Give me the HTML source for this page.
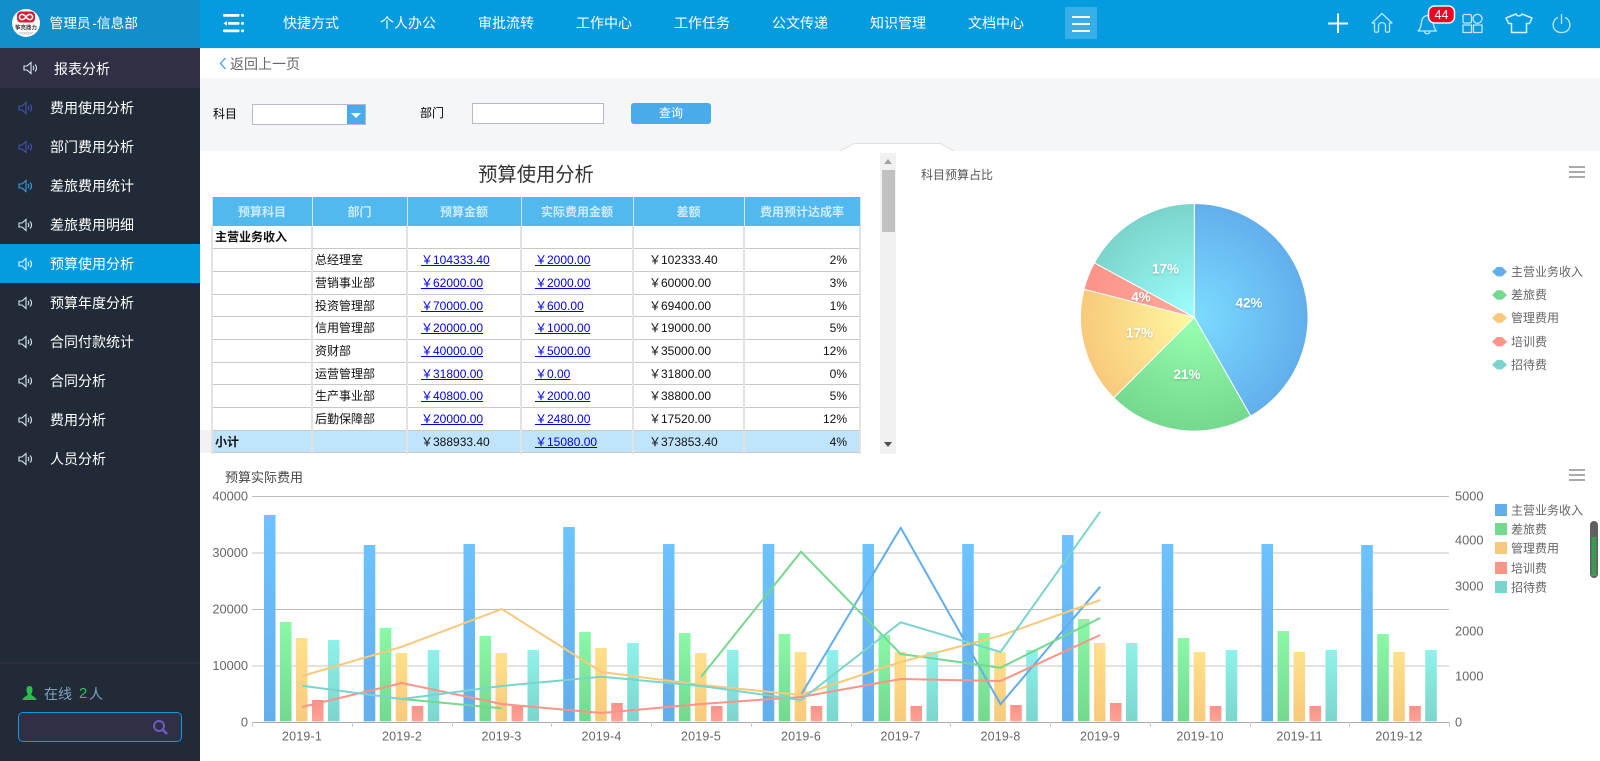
<!DOCTYPE html>
<html lang="zh">
<head>
<meta charset="utf-8">
<title>预算使用分析</title>
<style>
*{box-sizing:border-box}
html,body{margin:0;padding:0;width:1600px;height:761px;overflow:hidden;background:#fff;font-family:"Liberation Sans","Noto Sans CJK SC",sans-serif;font-size:12px;color:#000}
.a{position:absolute;white-space:nowrap}
#hl{position:absolute;left:0;top:0;width:200px;height:48px;background:#118fcb}
#hr{position:absolute;left:200px;top:0;width:1400px;height:48px;background:#059bdf;box-shadow:0 1px 1px rgba(0,0,0,.08)}
.nav{position:absolute;top:0;line-height:47px;color:#fff;font-size:14px}
#side{position:absolute;left:0;top:48px;width:200px;height:713px;background:#212b37}
.mi{position:absolute;left:0;width:200px;height:39px;line-height:39px;color:#fff;font-size:14px;padding-left:50px;padding-top:1px}
.mi svg{position:absolute;left:18px;top:13px}
#tb{position:absolute;left:211px;top:197px;width:650px;height:257px;overflow:hidden}
table{border-collapse:collapse;table-layout:fixed;width:648px;font-size:12px}
td{padding:1px 0 0;border-left:2px solid #e2e2e2;border-right:2px solid #e2e2e2;border-bottom:1px solid #c8c8c8;white-space:nowrap;overflow:hidden;line-height:20px;color:#111}
tr.h td{background:#52b9ee;color:#cdebfb;font-weight:bold;text-align:center;border:0;border-right:1px solid #cfeafa;border-left:1px solid #cfeafa;padding-top:0}
td.n{padding-left:2px}
td.l{padding-left:13px}
td.l2{padding-left:13px}
td.m{padding-left:15px}
td.p{text-align:right;padding-right:12px}
a{color:#0000ee;text-decoration:underline}
tr.s td{background:#bfe4fc}
</style>
</head>
<body>
<div id="hl"></div>
<svg class="a" style="left:12px;top:9px" width="28" height="28" viewBox="0 0 28 28">
<circle cx="14" cy="14" r="14" fill="#fff"/>
<rect x="5" y="2.5" width="18" height="11" rx="4" fill="#d81b33"/>
<path d="M14 8C12 5 9.500 5 8.500 6C7 7 7 9 8.500 10C9.500 11 12 11 14 8C16 5 18.500 5 19.500 6C21 7 21 9 19.500 10C18.500 11 16 11 14 8Z" fill="none" stroke="#fff" stroke-width="1.500"/>
<text x="14" y="20.500" font-size="5.500" font-weight="bold" text-anchor="middle" fill="#333" font-family="'Noto Sans CJK SC',sans-serif">筝亮鼎力</text>
<text x="14" y="25.500" font-size="3.500" text-anchor="middle" fill="#999">POWER</text>
</svg>
<div class="a" style="left:49.500px;top:0;line-height:48px;color:#fff;font-size:13.700px;word-spacing:-2px">管理员 -信息部</div>

<div id="hr"></div>
<svg class="a" style="left:222px;top:13px" width="23" height="21" viewBox="0 0 23 21">
<g fill="#fff">
<rect x="1" y="1" width="16.500" height="2.800" rx="1"/><rect x="19" y="1" width="3" height="2.800" rx="1"/>
<rect x="6" y="9" width="11.500" height="2.800" rx="1"/><rect x="19" y="9" width="3" height="2.800" rx="1"/>
<path d="M1.500 10.400L5 8V12.800Z"/>
<rect x="1" y="16.500" width="16.500" height="2.800" rx="1"/><rect x="19" y="16.500" width="3" height="2.800" rx="1"/>
</g>
</svg>
<div class="nav" style="left:283px">快捷方式</div>
<div class="nav" style="left:380px">个人办公</div>
<div class="nav" style="left:478px">审批流转</div>
<div class="nav" style="left:576px">工作中心</div>
<div class="nav" style="left:674px">工作任务</div>
<div class="nav" style="left:772px">公文传递</div>
<div class="nav" style="left:870px">知识管理</div>
<div class="nav" style="left:968px">文档中心</div>
<div class="a" style="left:1065px;top:7px;width:32px;height:32px;background:#38aee7"></div>
<div class="a" style="left:1072px;top:16px;width:18px;height:2px;background:#fff"></div>
<div class="a" style="left:1072px;top:23px;width:18px;height:2px;background:#fff"></div>
<div class="a" style="left:1072px;top:30px;width:18px;height:2px;background:#fff"></div>

<svg class="a" style="left:1320px;top:0" width="270" height="48" viewBox="0 0 270 48">
<path d="M8 23.500H28M18 13.500V33" stroke="#fff" stroke-width="2" fill="none"/>
<g fill="none" stroke="#bfe6fa" stroke-width="1.300" stroke-linejoin="round">
<path d="M52 23L62 13.500L72 23H69.500V31.500C69.500 32.500 65.500 32.500 65.500 31.500V26C65.500 21.500 58.500 21.500 58.500 26V31.500C58.500 32.500 54.500 32.500 54.500 31.500V23Z"/>
<path d="M98 31C101 29 101 25 101.500 22C102 18 104 16 107 15.500C111 16 112.500 18 113 22C113.500 25 114 29 116.500 31ZM104.500 31.500C105 34.500 109.500 34.500 110 31.500"/>
<rect x="143" y="14.500" width="8.500" height="8.500" rx="1.500"/>
<circle cx="157.500" cy="18.800" r="4.500"/>
<rect x="143" y="25" width="8.500" height="7.500"/>
<rect x="153.500" y="25" width="8.500" height="7.500"/>
<path d="M194 14C195 16.500 199 16.500 200 14L210 18L207.500 23.500H204.500V32.500H189.500V23.500H186.500L184 18Z" stroke="#d7f0fc" stroke-width="1.500" transform="translate(2 0)"/>
<path d="M238 17.500C231 20 231 32.500 241.500 32.500C252 32.500 252 20 245 17.500M241.500 14V24"/>
</g>
<rect x="108.500" y="6" width="26" height="17" rx="6" fill="#f50025" stroke="#e9f6fd" stroke-width="1.500"/>
<text x="121.500" y="19" font-size="12.500" fill="#fff" text-anchor="middle">44</text>
</svg>

<div id="side"></div>
<div class="a" style="left:0;top:48px;width:200px;height:40px;background:#2f3043"></div>
<div class="a" style="left:54px;top:49px;line-height:40px;color:#fff;font-size:14px">报表分析</div>
<svg class="a" style="left:23px;top:61px" width="16" height="15" viewBox="0 0 16 15"><g fill="none" stroke="#d8e6f0" stroke-width="1.100"><path d="M1 5H4L8 1.500V12.500L4 9H1Z"/><path d="M10 5C11 6 11 8 10 9M12 3.500C14 5.500 14 8.500 12 10.500"/></g></svg>

<div class="mi" style="top:88px"><svg width="16" height="15" viewBox="0 0 16 15"><g fill="none" stroke="#4a50b4" stroke-width="1.100"><path d="M1 5H4L8 1.500V12.500L4 9H1Z"/><path d="M10 5C11 6 11 8 10 9M12 3.500C14 5.500 14 8.500 12 10.500"/></g></svg>费用使用分析</div>
<div class="mi" style="top:127px"><svg width="16" height="15" viewBox="0 0 16 15"><g fill="none" stroke="#4a50b4" stroke-width="1.100"><path d="M1 5H4L8 1.500V12.500L4 9H1Z"/><path d="M10 5C11 6 11 8 10 9M12 3.500C14 5.500 14 8.500 12 10.500"/></g></svg>部门费用分析</div>
<div class="mi" style="top:166px"><svg width="16" height="15" viewBox="0 0 16 15"><g fill="none" stroke="#3aa0dc" stroke-width="1.100"><path d="M1 5H4L8 1.500V12.500L4 9H1Z"/><path d="M10 5C11 6 11 8 10 9M12 3.500C14 5.500 14 8.500 12 10.500"/></g></svg>差旅费用统计</div>
<div class="mi" style="top:205px"><svg width="16" height="15" viewBox="0 0 16 15"><g fill="none" stroke="#d8e6f0" stroke-width="1.100"><path d="M1 5H4L8 1.500V12.500L4 9H1Z"/><path d="M10 5C11 6 11 8 10 9M12 3.500C14 5.500 14 8.500 12 10.500"/></g></svg>差旅费用明细</div>
<div class="mi" style="top:244px;background:#059bdf"><svg width="16" height="15" viewBox="0 0 16 15"><g fill="none" stroke="#e6f6ff" stroke-width="1.100"><path d="M1 5H4L8 1.500V12.500L4 9H1Z"/><path d="M10 5C11 6 11 8 10 9M12 3.500C14 5.500 14 8.500 12 10.500"/></g></svg>预算使用分析</div>
<div class="mi" style="top:283px"><svg width="16" height="15" viewBox="0 0 16 15"><g fill="none" stroke="#d8e6f0" stroke-width="1.100"><path d="M1 5H4L8 1.500V12.500L4 9H1Z"/><path d="M10 5C11 6 11 8 10 9M12 3.500C14 5.500 14 8.500 12 10.500"/></g></svg>预算年度分析</div>
<div class="mi" style="top:322px"><svg width="16" height="15" viewBox="0 0 16 15"><g fill="none" stroke="#d8e6f0" stroke-width="1.100"><path d="M1 5H4L8 1.500V12.500L4 9H1Z"/><path d="M10 5C11 6 11 8 10 9M12 3.500C14 5.500 14 8.500 12 10.500"/></g></svg>合同付款统计</div>
<div class="mi" style="top:361px"><svg width="16" height="15" viewBox="0 0 16 15"><g fill="none" stroke="#d8e6f0" stroke-width="1.100"><path d="M1 5H4L8 1.500V12.500L4 9H1Z"/><path d="M10 5C11 6 11 8 10 9M12 3.500C14 5.500 14 8.500 12 10.500"/></g></svg>合同分析</div>
<div class="mi" style="top:400px"><svg width="16" height="15" viewBox="0 0 16 15"><g fill="none" stroke="#d8e6f0" stroke-width="1.100"><path d="M1 5H4L8 1.500V12.500L4 9H1Z"/><path d="M10 5C11 6 11 8 10 9M12 3.500C14 5.500 14 8.500 12 10.500"/></g></svg>费用分析</div>
<div class="mi" style="top:439px"><svg width="16" height="15" viewBox="0 0 16 15"><g fill="none" stroke="#d8e6f0" stroke-width="1.100"><path d="M1 5H4L8 1.500V12.500L4 9H1Z"/><path d="M10 5C11 6 11 8 10 9M12 3.500C14 5.500 14 8.500 12 10.500"/></g></svg>人员分析</div>

<div class="a" style="left:0;top:662px;width:200px;height:2px;background:#2b2f3f"></div>
<svg class="a" style="left:22px;top:685px" width="15" height="16" viewBox="0 0 15 16"><path d="M7.500 1C5 1 4.500 3 4.500 5C4.500 7 5.500 8.500 5.800 9.500C5 11 1 12 .5 15H14.500C14 12 10 11 9.200 9.500C9.500 8.500 10.500 7 10.500 5C10.500 3 10 1 7.500 1Z" fill="#2bbd4f"/></svg>
<div class="a" style="left:44px;top:684px;line-height:20px;font-size:14px;color:#7fa2c0">在线</div>
<div class="a" style="left:79px;top:684px;line-height:20px;font-size:15px;color:#2bc455">2</div>
<div class="a" style="left:89px;top:684px;line-height:20px;font-size:14px;color:#7fa2c0">人</div>
<div class="a" style="left:18px;top:712px;width:164px;height:30px;background:#2f3045;border:1px solid #0d9ae0;border-radius:5px"></div>
<svg class="a" style="left:152px;top:719px" width="17" height="16" viewBox="0 0 17 16"><circle cx="7" cy="7" r="5" fill="none" stroke="#6a5cc0" stroke-width="2"/><path d="M11 11L15 15" stroke="#6a5cc0" stroke-width="2.500"/></svg>

<svg class="a" style="left:219px;top:57px" width="8" height="13" viewBox="0 0 8 13"><path d="M6.500 1L1.500 6.500L6.500 12" fill="none" stroke="#3ba0e0" stroke-width="1.300"/></svg>
<div class="a" style="left:230px;top:54px;line-height:20px;font-size:14px;color:#666">返回上一页</div>

<div class="a" style="left:200px;top:78px;width:1400px;height:73px;background:#f5f6f8"></div>
<div class="a" style="left:213px;top:104px;line-height:20px;color:#000">科目</div>
<div class="a" style="left:252px;top:104px;width:114px;height:21px;background:#fff;border:1px solid #b8b8cc"></div>
<div class="a" style="left:347px;top:105px;width:18px;height:19px;background:#4aabea"></div>
<div class="a" style="left:351px;top:113px;width:0;height:0;border-left:5px solid transparent;border-right:5px solid transparent;border-top:5px solid #fff"></div>
<div class="a" style="left:420px;top:103px;line-height:20px;color:#000">部门</div>
<div class="a" style="left:472px;top:103px;width:132px;height:21px;background:#fff;border:1px solid #b8b8cc"></div>
<div class="a" style="left:631px;top:103px;width:80px;height:21px;background:#4aabeb;border-radius:3px;color:#fff;text-align:center;line-height:21px">查询</div>
<svg class="a" style="left:838px;top:142px" width="118" height="9" viewBox="0 0 118 9"><path d="M2 9L16 1.500H102L116 9" fill="#fff" stroke="#e0e0e0"/></svg>

<div class="a" style="left:212px;top:162px;width:648px;text-align:center;font-size:19.300px;line-height:28px;color:#333">预算使用分析</div>
<div class="a" style="left:200px;top:430px;width:12px;height:23px;background:#f2f2f2"></div>
<div id="tb">
<table>
<colgroup><col style="width:100px"><col style="width:95px"><col style="width:114px"><col style="width:112px"><col style="width:111px"><col style="width:116px"></colgroup>
<tr class="h" style="height:29px"><td>预算科目</td><td>部门</td><td>预算金额</td><td>实际费用金额</td><td>差额</td><td>费用预计达成率</td></tr>
<tr style="height:22px"><td class="n"><b>主营业务收入</b></td><td></td><td></td><td></td><td></td><td></td></tr>
<tr style="height:23px"><td></td><td class="n">总经理室</td><td class="l"><a>￥104333.40</a></td><td class="l2"><a>￥2000.00</a></td><td class="m">￥102333.40</td><td class="p">2%</td></tr>
<tr style="height:23px"><td></td><td class="n">营销事业部</td><td class="l"><a>￥62000.00</a></td><td class="l2"><a>￥2000.00</a></td><td class="m">￥60000.00</td><td class="p">3%</td></tr>
<tr style="height:22px"><td></td><td class="n">投资管理部</td><td class="l"><a>￥70000.00</a></td><td class="l2"><a>￥600.00</a></td><td class="m">￥69400.00</td><td class="p">1%</td></tr>
<tr style="height:23px"><td></td><td class="n">信用管理部</td><td class="l"><a>￥20000.00</a></td><td class="l2"><a>￥1000.00</a></td><td class="m">￥19000.00</td><td class="p">5%</td></tr>
<tr style="height:23px"><td></td><td class="n">资财部</td><td class="l"><a>￥40000.00</a></td><td class="l2"><a>￥5000.00</a></td><td class="m">￥35000.00</td><td class="p">12%</td></tr>
<tr style="height:22px"><td></td><td class="n">运营管理部</td><td class="l"><a>￥31800.00</a></td><td class="l2"><a>￥0.00</a></td><td class="m">￥31800.00</td><td class="p">0%</td></tr>
<tr style="height:23px"><td></td><td class="n">生产事业部</td><td class="l"><a>￥40800.00</a></td><td class="l2"><a>￥2000.00</a></td><td class="m">￥38800.00</td><td class="p">5%</td></tr>
<tr style="height:23px"><td></td><td class="n">后勤保障部</td><td class="l"><a>￥20000.00</a></td><td class="l2"><a>￥2480.00</a></td><td class="m">￥17520.00</td><td class="p">12%</td></tr>
<tr class="s" style="height:22px"><td class="n"><b>小计</b></td><td></td><td class="l">￥388933.40</td><td class="l2"><a>￥15080.00</a></td><td class="m">￥373853.40</td><td class="p">4%</td></tr>
<tr style="height:22px"><td></td><td></td><td></td><td></td><td></td><td></td></tr>
</table>
</div>

<div class="a" style="left:880px;top:153px;width:16px;height:301px;background:#f1f1f1"></div>
<div class="a" style="left:882px;top:170px;width:13px;height:62px;background:#c1c1c1"></div>
<div class="a" style="left:884px;top:159px;width:0;height:0;border-left:4px solid transparent;border-right:4px solid transparent;border-bottom:5px solid #a3a3a3"></div>
<div class="a" style="left:884px;top:442px;width:0;height:0;border-left:4px solid transparent;border-right:4px solid transparent;border-top:5px solid #505050"></div>

<div class="a" style="left:921px;top:165px;line-height:20px;color:#555">科目预算占比</div>
<div class="a" style="left:1569px;top:166px;width:16px;height:2px;background:#aaa"></div>
<div class="a" style="left:1569px;top:171px;width:16px;height:2px;background:#aaa"></div>
<div class="a" style="left:1569px;top:176px;width:16px;height:2px;background:#aaa"></div>

<svg class="a" style="left:0;top:0" width="1600" height="761" viewBox="0 0 1600 761" font-family="'Liberation Sans','Noto Sans CJK SC',sans-serif">
<defs>
<radialGradient id="p1" gradientUnits="userSpaceOnUse" cx="1194.3" cy="317.3" r="113.8"><stop offset="0" stop-color="#7bdcff"/><stop offset="1" stop-color="#62aeec"/></radialGradient>
<radialGradient id="p2" gradientUnits="userSpaceOnUse" cx="1194.3" cy="317.3" r="113.8"><stop offset="0" stop-color="#98ffb0"/><stop offset="1" stop-color="#74d88e"/></radialGradient>
<radialGradient id="p3" gradientUnits="userSpaceOnUse" cx="1194.3" cy="317.3" r="113.8"><stop offset="0" stop-color="#fff99f"/><stop offset="1" stop-color="#f8c97c"/></radialGradient>
<radialGradient id="p4" gradientUnits="userSpaceOnUse" cx="1194.3" cy="317.3" r="113.8"><stop offset="0" stop-color="#ffa99c"/><stop offset="1" stop-color="#fb9489"/></radialGradient>
<radialGradient id="p5" gradientUnits="userSpaceOnUse" cx="1194.3" cy="317.3" r="113.8"><stop offset="0" stop-color="#9efffd"/><stop offset="1" stop-color="#7ad4cc"/></radialGradient>
<linearGradient id="b1" x1="0" y1="0" x2="0" y2="1"><stop offset="0" stop-color="#6cc3ff"/><stop offset="1" stop-color="#63aeec"/></linearGradient>
<linearGradient id="b2" x1="0" y1="0" x2="0" y2="1"><stop offset="0" stop-color="#8af8a6"/><stop offset="1" stop-color="#72d98e"/></linearGradient>
<linearGradient id="b3" x1="0" y1="0" x2="0" y2="1"><stop offset="0" stop-color="#ffe08a"/><stop offset="1" stop-color="#f8c97c"/></linearGradient>
<linearGradient id="b4" x1="0" y1="0" x2="0" y2="1"><stop offset="0" stop-color="#fc9188"/><stop offset="1" stop-color="#ffa297"/></linearGradient>
<linearGradient id="b5" x1="0" y1="0" x2="0" y2="1"><stop offset="0" stop-color="#8ef2ea"/><stop offset="1" stop-color="#7bd5cd"/></linearGradient>
</defs>

<g stroke="#fff" stroke-width="1">
<path fill="url(#p1)" d="M1194.300 317.300V203.500A113.800 113.800 0 0 1 1250.700 416.100Z"/>
<path fill="url(#p2)" d="M1194.300 317.300L1250.700 416.100A113.800 113.800 0 0 1 1113.800 397.800Z"/>
<path fill="url(#p3)" d="M1194.300 317.300L1113.800 397.800A113.800 113.800 0 0 1 1084 289.200Z"/>
<path fill="url(#p4)" d="M1194.300 317.300L1084 289.200A113.800 113.800 0 0 1 1094.400 262.800Z"/>
<path fill="url(#p5)" d="M1194.300 317.300L1094.400 262.800A113.800 113.800 0 0 1 1194.300 203.500Z"/>
</g>
<g font-size="13.500" font-weight="bold" fill="#fff" text-anchor="middle" style="filter:drop-shadow(0 1px 1px rgba(0,0,0,.2))">
<text x="1249" y="307.500">42%</text><text x="1187" y="379">21%</text><text x="1139.500" y="337.500">17%</text><text x="1141" y="301.500">4%</text><text x="1165.500" y="273.500">17%</text>
</g>
<path d="M1492 271.700L1497 267H1502L1507 271.700L1502 276.400H1497Z" fill="#62aeec"/>
<path d="M1492 295L1497 290.300H1502L1507 295L1502 299.700H1497Z" fill="#74d88e"/>
<path d="M1492 318L1497 313.300H1502L1507 318L1502 322.700H1497Z" fill="#f8c97c"/>
<path d="M1492 341.700L1497 337H1502L1507 341.700L1502 346.400H1497Z" fill="#fb9489"/>
<path d="M1492 364.700L1497 360H1502L1507 364.700L1502 369.400H1497Z" fill="#7ad4cc"/>
<g font-size="12" fill="#666">
<text x="1511" y="276">主营业务收入</text><text x="1511" y="299">差旅费</text><text x="1511" y="322">管理费用</text><text x="1511" y="346">培训费</text><text x="1511" y="369">招待费</text>
</g>

<text x="225" y="482" font-size="13" fill="#444">预算实际费用</text>
<rect x="1569" y="469" width="16" height="2" fill="#aaa"/><rect x="1569" y="474" width="16" height="2" fill="#aaa"/><rect x="1569" y="479" width="16" height="2" fill="#aaa"/>

<rect x="252" y="496" width="1197" height="1" fill="#bbb"/>
<rect x="252" y="552" width="1197" height="2" fill="#e2e2e2"/>
<rect x="252" y="609" width="1197" height="1" fill="#bbb"/>
<rect x="252" y="665" width="1197" height="2" fill="#e2e2e2"/>

<g style="filter:drop-shadow(.7px 0 0 #cdeaff) drop-shadow(.7px 0 0 #fff)" fill="url(#b1)">
<rect x="264" y="515" width="11.500" height="206.300"/><rect x="363.750" y="545" width="11.500" height="176.300"/><rect x="463.500" y="544" width="11.500" height="177.300"/><rect x="563.250" y="527" width="11.500" height="194.300"/><rect x="663" y="544" width="11.500" height="177.300"/><rect x="762.750" y="544" width="11.500" height="177.300"/><rect x="862.500" y="544" width="11.500" height="177.300"/><rect x="962.250" y="544" width="11.500" height="177.300"/><rect x="1062" y="535" width="11.500" height="186.300"/><rect x="1161.750" y="544" width="11.500" height="177.300"/><rect x="1261.500" y="544" width="11.500" height="177.300"/><rect x="1361.250" y="545" width="11.500" height="176.300"/>
</g>
<g style="filter:drop-shadow(.7px 0 0 #d4fbe0) drop-shadow(.7px 0 0 #fff)" fill="url(#b2)">
<rect x="280" y="622" width="11.500" height="99.300"/><rect x="379.750" y="628" width="11.500" height="93.300"/><rect x="479.500" y="636" width="11.500" height="85.300"/><rect x="579.250" y="632" width="11.500" height="89.300"/><rect x="679" y="633" width="11.500" height="88.300"/><rect x="778.750" y="634" width="11.500" height="87.300"/><rect x="878.500" y="635" width="11.500" height="86.300"/><rect x="978.250" y="633" width="11.500" height="88.300"/><rect x="1078" y="619" width="11.500" height="102.300"/><rect x="1177.750" y="638" width="11.500" height="83.300"/><rect x="1277.500" y="631" width="11.500" height="90.300"/><rect x="1377.250" y="634" width="11.500" height="87.300"/>
</g>
<g style="filter:drop-shadow(.7px 0 0 #fff0c8) drop-shadow(.7px 0 0 #fff)" fill="url(#b3)">
<rect x="296" y="638" width="11.500" height="83.300"/><rect x="395.750" y="653" width="11.500" height="68.300"/><rect x="495.500" y="653" width="11.500" height="68.300"/><rect x="595.250" y="648" width="11.500" height="73.300"/><rect x="695" y="653" width="11.500" height="68.300"/><rect x="794.750" y="652" width="11.500" height="69.300"/><rect x="894.500" y="652" width="11.500" height="69.300"/><rect x="994.250" y="652" width="11.500" height="69.300"/><rect x="1094" y="643" width="11.500" height="78.300"/><rect x="1193.750" y="652" width="11.500" height="69.300"/><rect x="1293.500" y="652" width="11.500" height="69.300"/><rect x="1393.250" y="652" width="11.500" height="69.300"/>
</g>
<g style="filter:drop-shadow(.7px 0 0 #ffdcd8) drop-shadow(.7px 0 0 #fff)" fill="url(#b4)">
<rect x="312" y="700" width="11.500" height="21.300"/><rect x="411.750" y="706" width="11.500" height="15.300"/><rect x="511.500" y="705" width="11.500" height="16.300"/><rect x="611.250" y="703" width="11.500" height="18.300"/><rect x="711" y="706" width="11.500" height="15.300"/><rect x="810.750" y="706" width="11.500" height="15.300"/><rect x="910.500" y="706" width="11.500" height="15.300"/><rect x="1010.250" y="705" width="11.500" height="16.300"/><rect x="1110" y="703" width="11.500" height="18.300"/><rect x="1209.750" y="706" width="11.500" height="15.300"/><rect x="1309.500" y="706" width="11.500" height="15.300"/><rect x="1409.250" y="706" width="11.500" height="15.300"/>
</g>
<g style="filter:drop-shadow(.7px 0 0 #cdf8f4) drop-shadow(.7px 0 0 #fff)" fill="url(#b5)">
<rect x="328" y="640" width="11.500" height="81.300"/><rect x="427.750" y="650" width="11.500" height="71.300"/><rect x="527.500" y="650" width="11.500" height="71.300"/><rect x="627.250" y="643" width="11.500" height="78.300"/><rect x="727" y="650" width="11.500" height="71.300"/><rect x="826.750" y="650" width="11.500" height="71.300"/><rect x="926.500" y="652" width="11.500" height="69.300"/><rect x="1026.250" y="650" width="11.500" height="71.300"/><rect x="1126" y="643" width="11.500" height="78.300"/><rect x="1225.750" y="650" width="11.500" height="71.300"/><rect x="1325.500" y="650" width="11.500" height="71.300"/><rect x="1425.250" y="650" width="11.500" height="71.300"/>
</g>

<rect x="252" y="722" width="1198" height="1" fill="#aaa"/>
<path d="M252.500 722V727M352.500 722V727M452.500 722V727M551.500 722V727M651.500 722V727M751.500 722V727M851.500 722V727M950.500 722V727M1050.500 722V727M1150.500 722V727M1250.500 722V727M1349.500 722V727M1449.500 722V727" stroke="#ccc" fill="none"/>

<g fill="none" stroke-width="2" stroke-linejoin="round">
<path stroke="#62aeec" d="M801 695L900.700 527.700L1000.500 704.300L1100.200 586.700"/>
<path stroke="#74d88e" d="M402 699L501.700 708.300M701.200 676.700L801 551.700L900.700 654L1000.500 667.700L1100.200 618"/>
<path stroke="#f8c97c" d="M302.200 676L402 646.700L501.700 609L601.500 672L701.200 685L801 695L900.700 662L1000.500 635.700L1100.200 600"/>
<path stroke="#fb9489" d="M302.200 707L402 683L501.700 704L601.500 713L701.200 704L801 697L900.700 679L1000.500 681L1100.200 635"/>
<path stroke="#7ad4cc" d="M302.200 685.700L402 699L501.700 686L601.500 676.700L701.200 686L801 700L900.700 622.300L1000.500 652L1100.200 511.700"/>
</g>

<g font-size="12.800" fill="#666" text-anchor="end">
<text x="248" y="500.500">40000</text><text x="248" y="557">30000</text><text x="248" y="613.500">20000</text><text x="248" y="670">10000</text><text x="248" y="726.500">0</text>
</g>
<g font-size="12.800" fill="#666">
<text x="1455" y="500.500">5000</text><text x="1455" y="544.500">4000</text><text x="1455" y="590.500">3000</text><text x="1455" y="635.500">2000</text><text x="1455" y="680.500">1000</text><text x="1455" y="726.500">0</text>
</g>
<g font-size="12.500" letter-spacing=".2" fill="#666" text-anchor="middle">
<text x="302" y="740.500">2019-1</text><text x="402" y="740.500">2019-2</text><text x="501.500" y="740.500">2019-3</text><text x="601.500" y="740.500">2019-4</text><text x="701" y="740.500">2019-5</text><text x="801" y="740.500">2019-6</text><text x="900.500" y="740.500">2019-7</text><text x="1000.500" y="740.500">2019-8</text><text x="1100" y="740.500">2019-9</text><text x="1200" y="740.500">2019-10</text><text x="1299.500" y="740.500">2019-11</text><text x="1399" y="740.500">2019-12</text>
</g>

<rect x="1495" y="504" width="12" height="12" fill="#62aeec"/>
<rect x="1495" y="523" width="12" height="12" fill="#74d88e"/>
<rect x="1495" y="542" width="12" height="12" fill="#f8c97c"/>
<rect x="1495" y="562" width="12" height="12" fill="#fb9489"/>
<rect x="1495" y="581" width="12" height="12" fill="#7ad4cc"/>
<g font-size="12" fill="#666">
<text x="1511" y="514.500">主营业务收入</text><text x="1511" y="533.500">差旅费</text><text x="1511" y="552.500">管理费用</text><text x="1511" y="572.500">培训费</text><text x="1511" y="591.500">招待费</text>
</g>

<rect x="1590" y="521" width="8" height="57" rx="4" fill="#606060"/>
<rect x="1591.500" y="537" width="5" height="39" rx="1" fill="#2fa64e"/>
<path d="M1591.500 540H1596.500M1591.500 543H1596.500M1591.500 546H1596.500M1591.500 549H1596.500M1591.500 552H1596.500M1591.500 555H1596.500M1591.500 558H1596.500M1591.500 561H1596.500M1591.500 564H1596.500M1591.500 567H1596.500M1591.500 570H1596.500M1591.500 573H1596.500" stroke="#5a7a62" stroke-width="1"/>
</svg>
</body>
</html>
